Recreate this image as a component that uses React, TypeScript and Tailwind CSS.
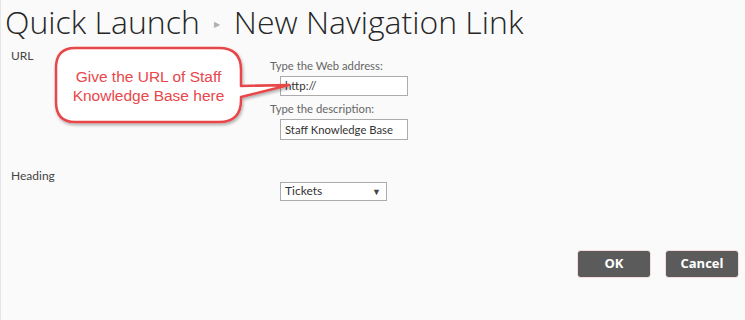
import React from 'react';

const Callout = () => (
  <div className="absolute left-[48px] top-[42px] w-[250px] h-[90px]">
    <svg width="250" height="90" viewBox="0 0 250 90" className="absolute inset-0">
      <defs>
        <filter id="sh" x="-10%" y="-10%" width="130%" height="140%">
          <feDropShadow dx="1" dy="2" stdDeviation="1.5" floodColor="#000" floodOpacity="0.3" />
        </filter>
      </defs>
      <path
        d="M26 6 H170 Q192 6 192 28 V44 L240 43 L192 55 V58 Q192 80 170 80 H26 Q7 80 7 60 V26 Q7 6 26 6 Z"
        fill="#ffffff"
        stroke="#e8464a"
        strokeWidth="2.5"
        strokeLinejoin="round"
        filter="url(#sh)"
      />
    </svg>
    <div className="absolute left-[7px] top-[25px] w-[185px] text-center text-[15.5px] leading-[19px] text-[#e8474a] font-['Liberation_Sans',Arial,sans-serif]">
      Give the URL of Staff
      <br />
      Knowledge Base here
    </div>
  </div>
);

export default function App() {
  return (
    <div className="relative w-[745px] h-[320px] bg-[#fafafa] border-l border-[#e6e6e6] font-['Lato','Open_Sans',sans-serif] text-[#444]">
      <h1 className="flex items-center pl-[4px] pt-[2px] h-[42px] leading-[40px] text-[32px] font-light text-[#262626] font-['Open_Sans',sans-serif]">
        <span>Quick Launch</span>
        <span className="mx-[14px] mt-[4px] text-[8px] leading-[8px] text-[#b0b0b0]">▶</span>
        <span>New Navigation Link</span>
      </h1>

      <div className="flex mt-[5px]">
        <div className="w-[269px] pl-[10px] text-[12px]">URL</div>
        <div className="flex flex-col">
          <div className="text-[11.3px] text-[#666] mt-[11px]">Type the Web address:</div>
          <input
            className="ml-[10px] mt-[1px] w-[128px] h-[20px] border border-[#ababab] bg-white px-[4px] text-[11.5px] text-[#333] outline-none"
            defaultValue="http://"
          />
          <div className="text-[11.3px] text-[#666] mt-[5px]">Type the description:</div>
          <input
            className="ml-[10px] mt-[1px] w-[128px] h-[21px] border border-[#ababab] bg-white px-[4px] text-[11.3px] text-[#333] outline-none"
            defaultValue="Staff Knowledge Base"
          />
        </div>
      </div>

      <div className="flex mt-[27px]">
        <div className="w-[279px] pl-[10px] text-[12px]">Heading</div>
        <div className="mt-[15px] flex items-center justify-between w-[107px] h-[19px] border border-[#ababab] bg-white pl-[4px] pr-[5px] text-[12px] text-[#333]">
          <span>Tickets</span>
          <span className="text-[9px] text-[#444]">▼</span>
        </div>
      </div>

      <div className="flex justify-end gap-[16px] pr-[7px] mt-[50px]">
        <button className="w-[72px] h-[26px] rounded-[2px] bg-[#5b5b5b] text-white text-[13px] font-bold outline outline-1 outline-[#f3dcdc] font-['Open_Sans',sans-serif]">
          OK
        </button>
        <button className="w-[72px] h-[26px] rounded-[2px] bg-[#5b5b5b] text-white text-[13px] font-bold outline outline-1 outline-[#f3dcdc] font-['Open_Sans',sans-serif]">
          Cancel
        </button>
      </div>

      <Callout />
    </div>
  );
}
